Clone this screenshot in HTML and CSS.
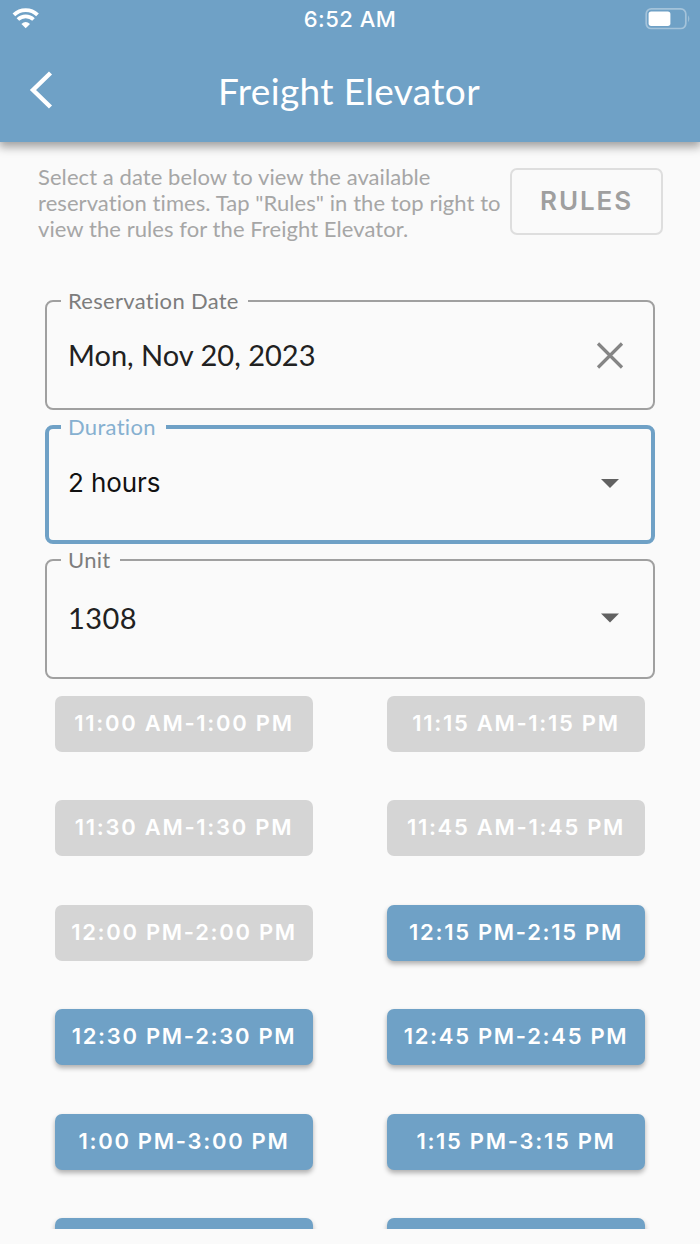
FILE: index.html
```html
<!DOCTYPE html>
<html lang="en">
<head>
<meta charset="utf-8">
<title>Freight Elevator</title>
<link rel="stylesheet" href="styles.css">
</head>
<body>
<div class="app">
  <header class="header">
    <div class="status">
      <svg class="wifi" width="28" height="22" viewBox="0 0 28 22" fill="none" stroke="#fff">
        <path d="M1.9 6.9A16.8 16.8 0 0 1 25.5 6.9" stroke-width="3.8"/>
        <path d="M5.9 11.6A11 11 0 0 1 21.5 11.6" stroke-width="3.6"/>
        <path d="M13.7 20.2 9.4 15.9Q13.7 12.3 18 15.9Z" fill="#fff" stroke="none"/>
      </svg>
      <span class="time">6:52 AM</span>
      <svg class="battery" width="46" height="22" viewBox="0 0 46 22">
        <rect x="1.2" y=".9" width="39.6" height="19.6" rx="5" fill="none" stroke="#a4c3da" stroke-width="1.7"/>
        <rect x="3.6" y="3.5" width="21.8" height="14.4" rx="2.6" fill="#fff"/>
        <path d="M43.2 7.2Q45.4 10.7 43.2 14.2Z" fill="#a4c3da"/>
      </svg>
    </div>
    <div class="toolbar">
      <svg class="back" width="26" height="38" viewBox="0 0 26 38"><path d="M22.5 2 5 19 22.5 36" fill="none" stroke="#fff" stroke-width="4.4"/></svg>
      <h1 class="title">Freight Elevator</h1>
    </div>
  </header>
  <main class="main">
    <section class="intro">
      <p class="hint">Select a date below to view the available<br>reservation times. Tap "Rules" in the top right to<br>view the rules for the Freight Elevator.</p>
      <button class="rules">RULES</button>
    </section>
    <form class="fields">
      <fieldset class="field field-date">
        <legend class="label">Reservation Date</legend>
        <div class="control">
          <span class="value">Mon, Nov 20, 2023</span>
          <svg width="28" height="28" viewBox="0 0 28 28"><path d="M2 2.5 26 26.5M26 2.5 2 26.5" stroke="#858585" stroke-width="3.2"/></svg>
        </div>
      </fieldset>
      <fieldset class="field field-duration">
        <legend class="label">Duration</legend>
        <div class="control">
          <span class="value">2 hours</span>
          <svg width="28" height="10" viewBox="0 0 28 10"><path d="M5 1H23L14 10Z" fill="#616161"/></svg>
        </div>
      </fieldset>
      <fieldset class="field field-unit">
        <legend class="label">Unit</legend>
        <div class="control">
          <span class="value">1308</span>
          <svg width="28" height="10" viewBox="0 0 28 10"><path d="M5 .5H23L14 9.5Z" fill="#616161"/></svg>
        </div>
      </fieldset>
    </form>
    <section class="slots">
      <button class="slot off">11:00 AM-1:00 PM</button>
      <button class="slot off">11:15 AM-1:15 PM</button>
      <button class="slot off">11:30 AM-1:30 PM</button>
      <button class="slot off">11:45 AM-1:45 PM</button>
      <button class="slot off">12:00 PM-2:00 PM</button>
      <button class="slot">12:15 PM-2:15 PM</button>
      <button class="slot">12:30 PM-2:30 PM</button>
      <button class="slot">12:45 PM-2:45 PM</button>
      <button class="slot">1:00 PM-3:00 PM</button>
      <button class="slot">1:15 PM-3:15 PM</button>
      <button class="slot"></button>
      <button class="slot"></button>
    </section>
  </main>
</div>
</body>
</html>
```

FILE: styles.css
```css
* { box-sizing: border-box; }
body { margin: 0; background: #fafafa; font-family: Lato, sans-serif; }
.app { width: 700px; height: 1244px; overflow: hidden; }
.header { position: relative; height: 142px; background: #6fa1c6; color: #fff; box-shadow: 0 4px 9px 1px rgba(0,0,0,.36); }
.status { display: grid; grid-template-columns: 1fr auto 1fr; align-items: center; height: 38px; padding: 0 10px 0 12px; }
.battery { justify-self: end; margin: -1px -.5px 0 0; }
.time { font: 500 22px/26px Inter, sans-serif; letter-spacing: .5px; margin-right: 2px; }
.toolbar { display: grid; grid-template-columns: 48px 1fr 48px; align-items: center; height: 103px; padding: 0 28px; }
.title { margin: 2px 2px 0 0; text-align: center; font-size: 37px; font-weight: 400; line-height: 44px; letter-spacing: .35px; }
.main { height: 1087px; overflow: hidden; }
.intro { display: flex; justify-content: space-between; padding: 22px 38px 0; height: 147px; }
.hint { margin: 0; color: #a6a6a6; font-size: 22px; line-height: 26px; letter-spacing: .07px; white-space: nowrap; }
.rules { width: 153px; height: 67px; margin: 4px -1px 0 0; padding: 0 0 2px; background: none; border: 2px solid #dedede; border-radius: 7px; color: #9f9f9f; font: 600 26px/30px Inter, sans-serif; letter-spacing: 1.9px; }
.fields { padding: 0 45px; }
.field { margin: 0; min-width: 0; padding: 0 14px; border: 2px solid #a0a0a0; border-radius: 8px; }
.label { margin: 0; padding: 0 9px 0 7px; font-size: 22px; line-height: 24px; color: #7d7d7d; letter-spacing: .3px; }
.control { display: flex; align-items: center; justify-content: space-between; padding: 0 15px 0 7px; }
.value { font-size: 29px; line-height: 36px; color: #212121; white-space: nowrap; }
.field-date { height: 121px; }
.field-date .control { height: 84px; }
.field-date .value { margin-top: -1px; }
.field-duration { height: 129px; margin-top: 5px; padding: 0 12px; border: 4px solid #6fa1c6; }
.field-duration .label { color: #86b0d0; padding-right: 10px; }
.field-duration .control { height: 87px; }
.field-duration .value { font-family: Inter, sans-serif; font-size: 26px; letter-spacing: -.1px; color: #111; }
.field-unit { height: 131px; margin-top: 4px; }
.field-unit .value { letter-spacing: .4px; }
.field-unit .control { height: 92px; }
.slots { display: grid; grid-template-columns: 258px 258px; gap: 48.4px 74px; padding: 17px 55px 0; }
.slot { height: 56px; padding: 0 0 2px; border: 0; border-radius: 7px; background: #6fa1c6; color: #fff; font: 600 22px/26px Inter, sans-serif; letter-spacing: 1.7px; white-space: nowrap; box-shadow: 0 3px 5px rgba(0,0,0,.3); }
.off { background: #d5d5d5; box-shadow: none; }
```
